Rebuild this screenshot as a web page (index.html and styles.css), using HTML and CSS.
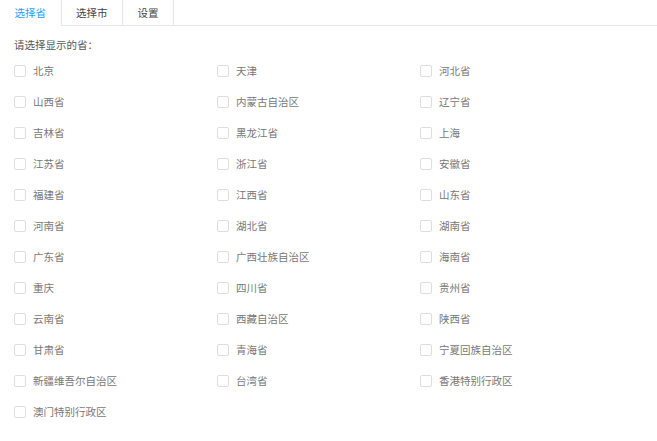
FILE: index.html
```html
<!DOCTYPE html>
<html lang="zh-CN">
<head>
    <meta charset="UTF-8">
    <title>选择省</title>
    <link rel="stylesheet" href="styles.css">
</head>
<body>
    <!-- 标签页 -->
    <ul class="tabs">
        <li class="active">选择省</li>
        <li>选择市</li>
        <li>设置</li>
    </ul>

    <div class="content">
        <div class="tip">请选择显示的省：</div>
        <div class="province-list" id="list"></div>
    </div>

    <script>
        var provinces = ['北京', '天津', '河北省', '山西省', '内蒙古自治区', '辽宁省',
            '吉林省', '黑龙江省', '上海', '江苏省', '浙江省', '安徽省',
            '福建省', '江西省', '山东省', '河南省', '湖北省', '湖南省',
            '广东省', '广西壮族自治区', '海南省', '重庆', '四川省', '贵州省',
            '云南省', '西藏自治区', '陕西省', '甘肃省', '青海省', '宁夏回族自治区',
            '新疆维吾尔自治区', '台湾省', '香港特别行政区', '澳门特别行政区'];

        var list = document.getElementById('list');
        provinces.forEach(function (name) {
            var item = document.createElement('label');
            item.className = 'item';
            item.innerHTML = '<span class="box"></span><span class="name">' + name + '</span>';
            item.onclick = function () {
                item.classList.toggle('checked');
            };
            list.appendChild(item);
        });
    </script>
</body>
</html>
```

FILE: styles.css
```css
body {
    margin: 0;
    background-color: #fff;
    color: #666;
    font-family: "Noto Sans CJK SC", "Noto Sans", sans-serif;
    font-size: 10.5px;
}
.tabs {
    display: flex;
    margin: 0;
    padding: 0;
    list-style: none;
    height: 25px;
    border-bottom: 1px solid #e6e6e6;
}
.tabs li {
    padding: 0 14.5px;
    line-height: 25px;
    height: 25px;
    color: #444;
    border-right: 1px solid #e6e6e6;
    cursor: pointer;
}
.tabs li.active {
    color: #1e9fff;
    height: 26px;
    background-color: #fff;
}
.content {
    padding: 9px 14px 0;
}
.tip {
    line-height: 20px;
    color: #555;
}
.province-list {
    display: grid;
    grid-template-columns: repeat(3, 203px);
    grid-auto-rows: 31px;
}
.item {
    display: flex;
    align-items: center;
    cursor: pointer;
}
.box {
    width: 10px;
    height: 10px;
    border: 1px solid #dedede;
    border-radius: 2px;
    margin-right: 7px;
}
.item.checked .box {
    background-color: #5fb878;
    border-color: #5fb878;
}
.name {
    color: #777;
}
```
